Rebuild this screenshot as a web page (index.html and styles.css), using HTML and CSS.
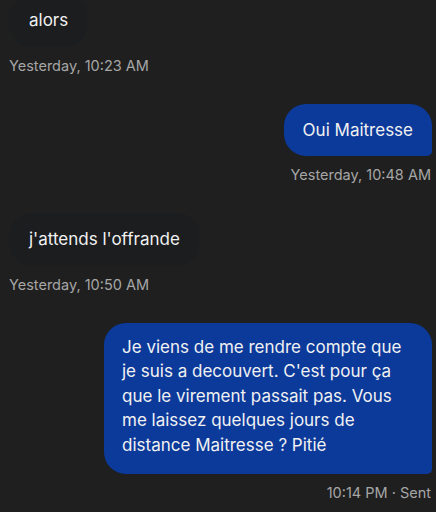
FILE: index.html
```html
<html>
<head>
  <title>Messages</title>
  <link rel="stylesheet" href="styles.css">
</head>
<body>
  <div class="thread">

    <div class="msg incoming">
      <div class="bubble">alors</div>
      <div class="time">Yesterday, 10:23 AM</div>
    </div>

    <div class="msg outgoing">
      <div class="bubble">Oui Maitresse</div>
      <div class="time">Yesterday, 10:48 AM</div>
    </div>

    <div class="msg incoming">
      <div class="bubble">j'attends l'offrande</div>
      <div class="time">Yesterday, 10:50 AM</div>
    </div>

    <div class="msg outgoing">
      <div class="bubble long">Je viens de me rendre compte que je suis a decouvert. C'est pour ça que le virement passait pas. Vous me laissez quelques jours de distance Maitresse ? Pitié</div>
      <div class="time">10:14 PM &middot; Sent</div>
    </div>

  </div>
</body>
</html>
```

FILE: styles.css
```css
body {
  margin: 0;
  padding: 0;
  background-color: #1f1f1f;
  font-family: Inter, Roboto, sans-serif;
  color: #f1f1f1;
  overflow: hidden;
}

.thread {
  display: flex;
  flex-direction: column;
  gap: 29px;
  padding: 0 4px 0 9px;
  margin-top: -6px;
}

.msg {
  display: flex;
  flex-direction: column;
  gap: 10px;
}

.incoming {
  align-items: flex-start;
}

.outgoing {
  align-items: flex-end;
}

.bubble {
  font-size: 17px;
  line-height: 24.5px;
  padding: 14px 19px;
  border-radius: 22px;
}

.incoming .bubble {
  background-color: #1b1d1f;
  margin-left: 1px;
}

.outgoing .bubble {
  background-color: #0b3a9b;
  border-bottom-right-radius: 5px;
}

.long {
  max-width: 292px;
  padding: 12px 18px 17px 18px;
}

.time {
  font-size: 14.5px;
  line-height: 18px;
  color: #a6a6a6;
}

.outgoing .time {
  margin-right: 1px;
}
```
